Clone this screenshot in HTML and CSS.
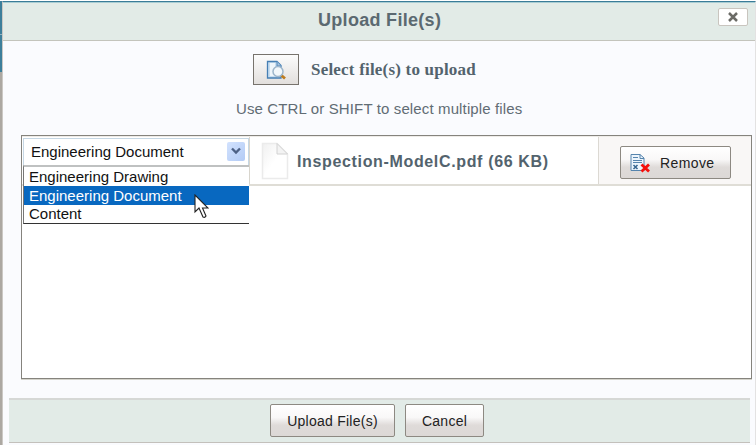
FILE: index.html
```html
<!DOCTYPE html>
<html>
<head>
    <meta charset="utf-8">
    <title>Upload File(s)</title>
    <link rel="stylesheet" href="styles.css">
</head>
<body>
    <div class="page">
        <div class="page-edge"></div>
        <div class="dialog">
            <div class="dialog-header">
                <span class="title">Upload File(s)</span>
                <button class="close-btn">
                    <svg width="10" height="10" viewBox="0 0 10 10"><path d="M1 1L9 9M9 1L1 9" stroke="#6b6b66" stroke-width="2.5"/></svg>
                </button>
            </div>

            <div class="select-row">
                <button class="btn browse-btn">
                    <svg width="20" height="20" viewBox="0 0 20 20">
                        <path d="M1.500 1.500H11L15 5.500V18H1.500Z" fill="#c9dff1" stroke="#467fb4" stroke-width="1.300"/>
                        <path d="M4 3H9V16H4Z" fill="#fff" opacity=".7"/>
                        <path d="M11 1.500V6H15" fill="#a9c4de" stroke="#5187b9"/>
                        <path d="M15.500 15.500L19 18.500" stroke="#bd7c20" stroke-width="2.800"/>
                        <circle cx="12" cy="11.500" r="5" fill="#f3f8fb" stroke="#9eb6cb" stroke-width="1.500"/>
                    </svg>
                </button>
                <span class="select-label">Select file(s) to upload</span>
            </div>
            <div class="hint">Use CTRL or SHIFT to select multiple files</div>

            <div class="file-list">
                <div class="file-row">
                    <div class="type-cell">
                        <div class="select">
                            <span>Engineering Document</span>
                            <span class="select-arrow">
                                <svg width="10" height="8" viewBox="0 0 10 8"><path d="M1 1.500L5 5.500L9 1.500" fill="none" stroke="#4d6185" stroke-width="2.400"/></svg>
                            </span>
                        </div>
                        <div class="select-menu">
                            <div class="option">Engineering Drawing</div>
                            <div class="option selected">Engineering Document</div>
                            <div class="option">Content</div>
                        </div>
                        <svg class="cursor" width="15" height="26" viewBox="0 0 15 26">
                            <path d="M1 1V18L5 14L9 23Q11 24 12 22L8.500 14H14Z" fill="#fff" stroke="#222" stroke-width="1.100"/>
                        </svg>
                    </div>
                    <div class="name-cell">
                        <svg width="28" height="38" viewBox="0 0 28 38">
                            <defs>
                                <linearGradient id="paper" x1="0" y1="0" x2="1" y2="1">
                                    <stop offset="0" stop-color="#f0f0f0"/>
                                    <stop offset=".5" stop-color="#fff"/>
                                </linearGradient>
                            </defs>
                            <path d="M1.500 1.500H16L26.500 12V36.500H1.500Z" fill="url(#paper)" stroke="#ebebeb" stroke-width="1.500"/>
                            <path d="M16 1.500V12H26.500Z" fill="#f3f3f3" stroke="#d2d2d2"/>
                        </svg>
                        <span class="file-name">Inspection-ModelC.pdf (66 KB)</span>
                    </div>
                    <div class="action-cell">
                        <button class="btn remove-btn">
                            <svg width="20" height="20" viewBox="0 0 20 20">
                                <path d="M1 1.500H10L14 5V17.500H1Z" fill="#edf5fc" stroke="#5684ad"/>
                                <path d="M10 1.500V5.500H14M3 4.500H8M3 7.500H12M3 9.500H12" fill="none" stroke="#5684ad"/>
                                <path d="M3.500 12L7.500 16M7.500 12L3.500 16" stroke="#34648f" stroke-width="1.500"/>
                                <path d="M11.500 11.500L19 18.500M19 11.500L11.500 18.500" stroke="#f5100c" stroke-width="2.800"/>
                            </svg>
                            <span class="remove-text">Remove</span>
                        </button>
                    </div>
                </div>
            </div>

            <div class="dialog-footer">
                <button class="btn upload-btn">Upload File(s)</button>
                <button class="btn cancel-btn">Cancel</button>
            </div>
        </div>
    </div>
</body>
</html>
```

FILE: styles.css
```css
* { box-sizing: border-box; }
body {
    margin: 0;
    font-family: "Liberation Sans", Arial, sans-serif;
    font-size: 15px;
    color: #111;
    background: #fff;
    overflow: hidden;
}
svg { display: block; flex: none; }
.page {
    display: flex;
    height: 445px;
    padding-top: 1px;
}
.page-edge {
    width: 2px;
    background: linear-gradient(#3d7f9b 33px, #8fb3c2 33px, #8fb3c2 34px, #3d7f9b 34px, #3d7f9b 71px, #aca8a2 71px);
}
.dialog {
    flex: 1;
    background: #fafbfe;
    border-top: 1px solid #3a7c98;
    border-left: 1px solid #cbc8c4;
    border-right: 1px solid #e3e2e2;
}
.dialog-header {
    display: flex;
    align-items: flex-start;
    height: 39px;
    padding: 6px 7px 0 315px;
    background: #e2ebe7;
    border-top: 1px solid #a9cdd3;
    border-bottom: 1px solid #c3c4bc;
}
.title {
    line-height: 22px;
    font-size: 18px;
    font-weight: bold;
    letter-spacing: 0.3px;
    color: #5b6971;
    white-space: nowrap;
}
.close-btn {
    display: flex;
    align-items: center;
    justify-content: center;
    width: 30px;
    height: 18px;
    margin-left: auto;
    margin-top: -1px;
    padding: 0;
    background: #fff;
    border: 1px solid #c9c5bf;
    border-radius: 2px;
}
.btn {
    display: flex;
    align-items: center;
    justify-content: center;
    padding: 0;
    font-family: inherit;
    font-size: 14px;
    letter-spacing: 0.25px;
    color: #222;
    white-space: nowrap;
    background: linear-gradient(#fff 0%, #f9f8f8 40%, #dfdbd9 65%, #dcd8d6 100%);
    border: 1px solid #8d8982;
    border-radius: 2px;
}
.select-row {
    display: flex;
    align-items: center;
    margin-top: 13px;
    padding-left: 250px;
    height: 31px;
}
.browse-btn {
    width: 46px;
    height: 31px;
    border: 1px solid #77736d;
    border-radius: 0;
    background: linear-gradient(#fcfcfc, #e2dfdd);
}
.select-label {
    margin-left: 12px;
    font-family: "Liberation Serif", serif;
    font-size: 17px;
    font-weight: bold;
    letter-spacing: 0.2px;
    color: #53636d;
}
.hint {
    height: 50px;
    padding: 14px 0 0 233px;
    line-height: 20px;
    letter-spacing: 0.13px;
    color: #616c74;
    white-space: nowrap;
}
.file-list {
    width: 731px;
    height: 244px;
    margin-left: 18px;
    background: #fff;
    border: 1px solid #85837d;
    box-shadow: 0 1px 0 #d4d3cb;
}
.file-row {
    display: flex;
    height: 50px;
    border-top: 1px solid #eeece8;
    border-bottom: 2px solid #dfddd6;
}
.type-cell {
    position: relative;
    width: 228px;
    padding: 1px 0 0 1px;
    border-right: 1px solid #d8d5cd;
}
.select {
    display: flex;
    align-items: center;
    height: 28px;
    padding: 0 3px 2px 7px;
    border: 1px solid #c6d7e4;
    background: #fff;
    white-space: nowrap;
}
.select-arrow {
    display: flex;
    align-items: center;
    justify-content: center;
    width: 18px;
    height: 19px;
    margin-left: auto;
    border-radius: 2px;
    background: linear-gradient(135deg, #d2e2fe, #b3cbf5);
}
/* open list, drawn over the rows below */
.select-menu {
    position: absolute;
    left: 1px;
    top: 28px;
    width: 226px;
    padding-top: 1px;
    background: #fff;
    border-top: 2px solid #bfc1c1;
    border-left: 1px solid #777;
    border-bottom: 1px solid #333;
}
.option {
    height: 18px;
    padding-left: 5px;
    line-height: 18px;
    white-space: nowrap;
}
.option.selected {
    height: 19px;
    line-height: 19px;
    background: #0868c0;
    color: #fff;
}
.cursor {
    position: absolute;
    left: 172px;
    top: 57px;
}
.name-cell {
    display: flex;
    align-items: center;
    flex: 1;
    padding-left: 11px;
}
.file-name {
    margin-left: 8px;
    padding-top: 2px;
    font-size: 16px;
    font-weight: bold;
    letter-spacing: 0.65px;
    color: #53636d;
    white-space: nowrap;
}
.action-cell {
    width: 153px;
    padding: 9px 0 0 21px;
    border-left: 1px solid #dcd9d3;
    background: #f9f7f6;
}
.remove-btn {
    width: 111px;
    height: 33px;
    justify-content: flex-start;
    padding-left: 9px;
}
.remove-text {
    margin-left: 10px;
    letter-spacing: 0.4px;
}
.dialog-footer {
    display: flex;
    gap: 10px;
    width: 741px;
    height: 45px;
    margin: 19px 0 0 6px;
    padding: 4px 0 0 261px;
    background: #e2ebe7;
    border-top: 2px solid #d6d8d6;
    border-bottom: 1px solid #c3c0bb;
}
.upload-btn {
    width: 125px;
    height: 33px;
}
.cancel-btn {
    width: 79px;
    height: 33px;
}
```
